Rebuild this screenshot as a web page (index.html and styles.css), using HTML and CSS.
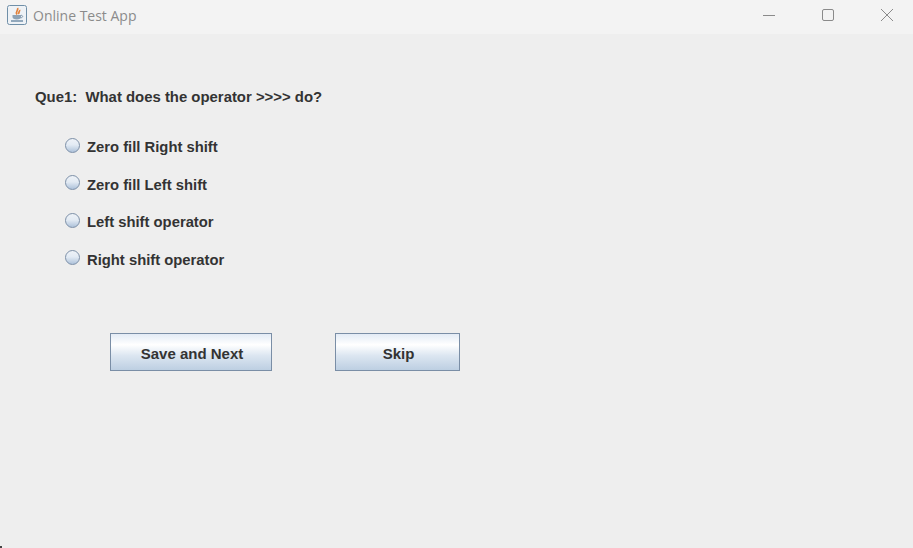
FILE: index.html
```html
<!DOCTYPE html>
<html lang="en">
<head>
    <meta charset="UTF-8">
    <title>Online Test App</title>
    <link rel="stylesheet" href="styles.css">
</head>
<body>
    <div class="titlebar">
        <div class="app-title">
            <svg class="app-icon" width="20" height="20" viewBox="0 0 20 20">
                <rect x="0.5" y="0.5" width="19" height="19" rx="2" fill="#eef2f6" stroke="#6f8fa8"/>
                <path d="M10.500 3c1.500 2-2.500 3-.5 6.500M12.500 5c.8 1.200-1.500 2-.5 4" fill="none" stroke="#e2813a" stroke-width="1.700"/>
                <path d="M5.500 10h8.500v2c0 1.500-1.500 2.500-4.200 2.500s-4.300-1-4.300-2.500z" fill="#8ea3b6"/>
                <path d="M14 10.300c2.300 0 2.300 2.500-.5 2.500" fill="none" stroke="#7d93a8"/>
                <path d="M4 16h12" stroke="#5f7f9c" stroke-width="1.300"/>
            </svg>
            <span>Online Test App</span>
        </div>
        <div class="window-controls">
            <svg class="control" width="14" height="14" viewBox="0 0 14 14"><path d="M1 7.500h12" stroke="#8a8a8a"/></svg>
            <svg class="control" width="14" height="14" viewBox="0 0 14 14"><rect x="1.500" y="1.500" width="11" height="11" rx="1.500" fill="none" stroke="#8a8a8a"/></svg>
            <svg class="control" width="14" height="14" viewBox="0 0 14 14"><path d="M1 1l12 12M13 1L1 13" stroke="#8a8a8a"/></svg>
        </div>
    </div>

    <div class="content">
        <p class="question">Que1:&nbsp; What does the operator &gt;&gt;&gt;&gt; do?</p>

        <div class="options">
            <label class="option"><span class="radio"></span>Zero fill Right shift</label>
            <label class="option"><span class="radio"></span>Zero fill Left shift</label>
            <label class="option"><span class="radio"></span>Left shift operator</label>
            <label class="option"><span class="radio"></span>Right shift operator</label>
        </div>

        <div class="actions">
            <button class="btn btn-save">Save and Next</button>
            <button class="btn btn-skip">Skip</button>
        </div>
    </div>
</body>
</html>
```

FILE: styles.css
```css
/* page */
html, body {
    height: 100%;
}

body {
    margin: 0;
    background: #eeeeee;
    color: #333333;
    font-family: "Liberation Sans", Arial, sans-serif;
    overflow: hidden;
}

/* dark speck in the rounded window corner */
body::after {
    content: "";
    position: absolute;
    left: 0;
    bottom: 0;
    width: 2px;
    height: 2px;
    background: #444444;
}

/* window title bar */
.titlebar {
    height: 34px;
    background: #f3f3f3;
    display: flex;
    justify-content: space-between;
    align-items: center;
}

.app-title {
    display: flex;
    align-items: center;
    gap: 6px;
    padding-left: 7px;
    margin-top: -4px;
    color: #8b8b8b;
    font-family: "Open Sans", "Liberation Sans", sans-serif;
    font-size: 14px;
}

.app-icon {
    display: block;
}

.window-controls {
    display: flex;
    gap: 45px;
    padding-right: 19px;
    margin-top: -4px;
}

.control {
    display: block;
}

/* question */
.content {
    padding: 55px 0 0 35px;
}

.question {
    margin: 0;
    font-size: 14.900px;
    line-height: 16px;
    font-weight: bold;
}

/* answers */
.options {
    display: flex;
    flex-direction: column;
    gap: 21.670px;
    margin-top: 34px;
    padding-left: 30px;
}

.option {
    display: flex;
    align-items: center;
    gap: 7px;
    height: 16px;
    font-size: 14.800px;
    font-weight: bold;
}

.radio {
    width: 13px;
    height: 13px;
    margin-top: -4px;
    border: 1px solid #7d90a8;
    border-radius: 50%;
    background: linear-gradient(#eef2f7, #e3ebf4 45%, #aec2da);
}

/* buttons */
.actions {
    display: flex;
    gap: 63px;
    margin-top: 65px;
    padding-left: 75px;
}

.btn {
    height: 38px;
    padding: 3px 0 0 2px;
    border: 1px solid #7a8ea6;
    border-radius: 0;
    background: linear-gradient(#e3ebf5, #ffffff 30%, #dce6f1 60%, #bdcfe2);
    color: #333333;
    font-family: inherit;
    font-size: 15px;
    font-weight: bold;
}

.btn-save {
    width: 162px;
}

.btn-skip {
    width: 125px;
}
```
